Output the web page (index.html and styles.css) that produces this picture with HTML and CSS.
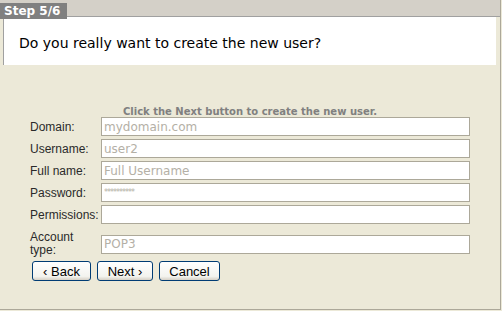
FILE: index.html
```html
<!DOCTYPE html>
<html lang="en">
<head>
  <meta charset="UTF-8" />
  <title>New User Wizard</title>
  <link rel="stylesheet" href="styles.css">
</head>
<body>
  <div class="wizard">
    <div class="topbar">
      <span class="step">Step 5/6</span>
    </div>

    <div class="question">Do you really want to create the new user?</div>

    <div class="content">
      <p class="hint">Click the Next button to create the new user.</p>

      <div class="form">
        <label>Domain:</label>
        <input type="text" value="mydomain.com" disabled>

        <label>Username:</label>
        <input type="text" value="user2" disabled>

        <label>Full name:</label>
        <input type="text" value="Full Username" disabled>

        <label>Password:</label>
        <input type="text" value="**********" class="pwd" disabled>

        <label>Permissions:</label>
        <input type="text" value="" disabled>

        <label class="two-line">Account type:</label>
        <input type="text" value="POP3" class="low" disabled>
      </div>

      <div class="buttons">
        <button class="btn back">&lsaquo; Back</button>
        <button class="btn next">Next &rsaquo;</button>
        <button class="btn cancel">Cancel</button>
      </div>
    </div>
  </div>
</body>
</html>
```

FILE: styles.css
```css
* {
  margin: 0;
  padding: 0;
  box-sizing: border-box;
}

body {
  font-family: 'DejaVu Sans', Tahoma, sans-serif;
  background: #ece9d8;
  width: 502px;
  height: 311px;
  overflow: hidden;
}

.wizard {
  width: 501px;
  height: 310px;
  border-right: 1px solid #aca899;
  border-bottom: 1px solid #aca899;
  background: #ece9d8;
}

.topbar {
  height: 17px;
  background: #d4d0c8;
  border-bottom: 1px solid #a0a0a0;
}

.step {
  display: inline-block;
  height: 16px;
  width: 67px;
  background: #808080;
  color: #fff;
  font-weight: bold;
  font-size: 12px;
  line-height: 16px;
  padding-left: 4px;
}

.question {
  margin-left: 3px;
  margin-right: 4px;
  height: 48px;
  background: #fff;
  border-left: 1px solid #a0a0a0;
  padding: 18px 0 0 15px;
  font-size: 14px;
  color: #000;
}

.content {
  padding: 41px 0 0 30px;
}

.hint {
  width: 440px;
  text-align: center;
  font-size: 10px;
  font-weight: bold;
  color: #808080;
  line-height: 12px;
  margin-bottom: -1px;
}

.form {
  display: grid;
  grid-template-columns: 71px 369px;
  row-gap: 3px;
  align-items: center;
}

.form label {
  font-family: 'Liberation Sans', Arial, sans-serif;
  font-size: 12px;
  color: #2a2a2a;
  line-height: 14px;
}

.form label.two-line {
  width: 60px;
  margin-top: 4px;
  line-height: 13px;
}

.form input {
  height: 19px;
  border: 1px solid #aca899;
  background: #fff;
  font-family: 'DejaVu Sans', sans-serif;
  font-size: 12px;
  color: #b4b0a6;
  padding: 0 2px;
}

.form input.pwd {
  font-size: 8px;
  letter-spacing: -1px;
}

.form input.low {
  margin-top: 4px;
}

.buttons {
  display: flex;
  gap: 6px;
  padding-left: 2px;
  margin-top: 4px;
}

.btn {
  height: 20px;
  font-family: 'Liberation Sans', Arial, sans-serif;
  font-size: 13px;
  color: #000;
  background: linear-gradient(#ffffff, #f3f3ee 80%, #d6d0c5);
  border: 1px solid #003c74;
  border-radius: 3px;
}

.back {
  width: 59px;
}

.next {
  width: 56px;
}

.cancel {
  width: 61px;
}
```
